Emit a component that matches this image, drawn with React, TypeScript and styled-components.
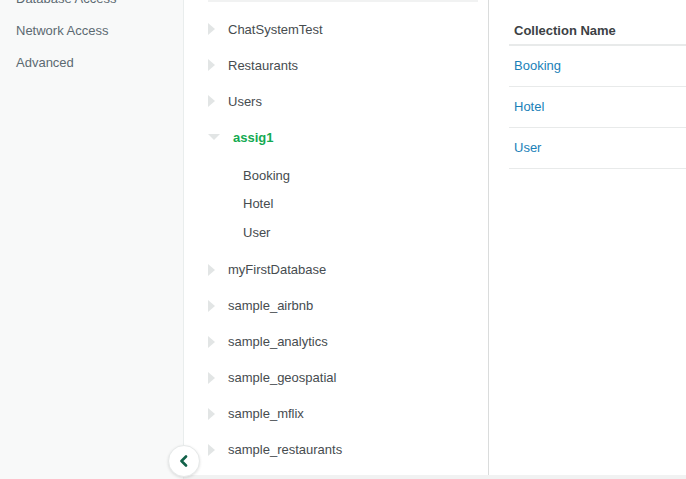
import React from "react";
import styled, { createGlobalStyle } from "styled-components";

const Global = createGlobalStyle`
  html, body { margin: 0; padding: 0; }
  body {
    font-family: "Liberation Sans", Arial, Helvetica, sans-serif;
    font-size: 13px;
    background: #ffffff;
    overflow: hidden;
  }
  #root { height: 479px; }
`;

const Page = styled.div`
  position: relative;
  display: flex;
  width: 686px;
  height: 479px;
  overflow: hidden;
`;

const Sidebar = styled.nav`
  width: 183px;
  flex: none;
  background: #f8f9f9;
  border-right: 1px solid #e9eded;
  display: flex;
  flex-direction: column;
  margin-top: -17px;
`;

const NavItem = styled.div`
  height: 32px;
  line-height: 32px;
  padding-left: 16px;
  color: #5c6a72;
  font-size: 13px;
`;

const Main = styled.div`
  flex: 1;
  display: flex;
  flex-direction: column;
  min-width: 0;
`;

const Panels = styled.div`
  flex: 1;
  display: flex;
  min-height: 0;
`;

const BottomStrip = styled.div`
  height: 4px;
  flex: none;
  background: #f1f2f2;
`;

const TreePanel = styled.div`
  width: 304px;
  flex: none;
  border-right: 1px solid #dadcdc;
  display: flex;
  flex-direction: column;
`;

const FilterEdge = styled.div`
  height: 2px;
  margin: 0 10px 9px 24px;
  background: #f1f2f2;
`;

const DbRow = styled.div<{ $open?: boolean }>`
  height: 36px;
  display: flex;
  align-items: center;
  padding-left: 24px;
  color: ${(p) => (p.$open ? "#13aa52" : "#464c4f")};
  font-weight: ${(p) => (p.$open ? 700 : 400)};
  font-size: 13px;
`;

const Caret = styled.span<{ $open?: boolean }>`
  width: 0;
  height: 0;
  flex: none;
  margin-right: 13px;
  ${(p) =>
    p.$open
      ? `
    border-left: 6px solid transparent;
    border-right: 6px solid transparent;
    border-top: 6px solid #e2e5e5;
    margin-top: -1px;
  `
      : `
    border-top: 6px solid transparent;
    border-bottom: 6px solid transparent;
    border-left: 7px solid #e2e5e5;
  `}
`;

const Children = styled.div`
  padding: 6px 0 5px;
  display: flex;
  flex-direction: column;
`;

const ChildRow = styled.div`
  height: 28.5px;
  display: flex;
  align-items: center;
  padding-left: 59px;
  color: #464c4f;
  font-size: 13px;
`;

const TablePanel = styled.div`
  flex: 1;
  min-width: 0;
  padding-left: 20px;
`;

const Table = styled.div`
  display: flex;
  flex-direction: column;
  margin-right: -20px;
`;

const HeaderCell = styled.div`
  height: 46px;
  display: flex;
  align-items: center;
  padding: 16px 5px 0;
  box-sizing: border-box;
  font-weight: 700;
  color: #3c4144;
  border-bottom: 2px solid #e8eaea;
`;

const BodyCell = styled.div`
  height: 41px;
  box-sizing: border-box;
  display: flex;
  align-items: center;
  padding: 0 5px 2px;
  color: #1a7fb8;
  border-bottom: 1px solid #e8eaea;
`;

const CollapseButton = styled.button`
  position: absolute;
  left: 168px;
  top: 445px;
  width: 32px;
  height: 32px;
  border-radius: 50%;
  border: 1px solid #e6e9e9;
  background: #ffffff;
  box-shadow: 0 1px 3px rgba(0, 0, 0, 0.12);
  display: flex;
  align-items: center;
  justify-content: center;
  padding: 0;
  cursor: pointer;
`;

const databases: { name: string; open?: boolean; children?: string[] }[] = [
  { name: "ChatSystemTest" },
  { name: "Restaurants" },
  { name: "Users" },
  { name: "assig1", open: true, children: ["Booking", "Hotel", "User"] },
  { name: "myFirstDatabase" },
  { name: "sample_airbnb" },
  { name: "sample_analytics" },
  { name: "sample_geospatial" },
  { name: "sample_mflix" },
  { name: "sample_restaurants" },
];

export default function App() {
  return (
    <Page>
      <Global />
      <Sidebar>
        <NavItem>Database Access</NavItem>
        <NavItem>Network Access</NavItem>
        <NavItem>Advanced</NavItem>
      </Sidebar>
      <Main>
        <Panels>
          <TreePanel>
            <FilterEdge />
            {databases.map((db) => (
              <React.Fragment key={db.name}>
                <DbRow $open={db.open}>
                  <Caret $open={db.open} />
                  {db.name}
                </DbRow>
                {db.children && (
                  <Children>
                    {db.children.map((c) => (
                      <ChildRow key={c}>{c}</ChildRow>
                    ))}
                  </Children>
                )}
              </React.Fragment>
            ))}
          </TreePanel>
          <TablePanel>
            <Table>
              <HeaderCell>Collection Name</HeaderCell>
              <BodyCell>Booking</BodyCell>
              <BodyCell>Hotel</BodyCell>
              <BodyCell>User</BodyCell>
            </Table>
          </TablePanel>
        </Panels>
        <BottomStrip />
      </Main>
      <CollapseButton aria-label="Collapse">
        <svg width="12" height="12" viewBox="0 0 12 12">
          <path
            d="M8 1.5 L3.5 6 L8 10.5"
            fill="none"
            stroke="#116149"
            strokeWidth="2.6"
            strokeLinecap="round"
            strokeLinejoin="round"
          />
        </svg>
      </CollapseButton>
    </Page>
  );
}
